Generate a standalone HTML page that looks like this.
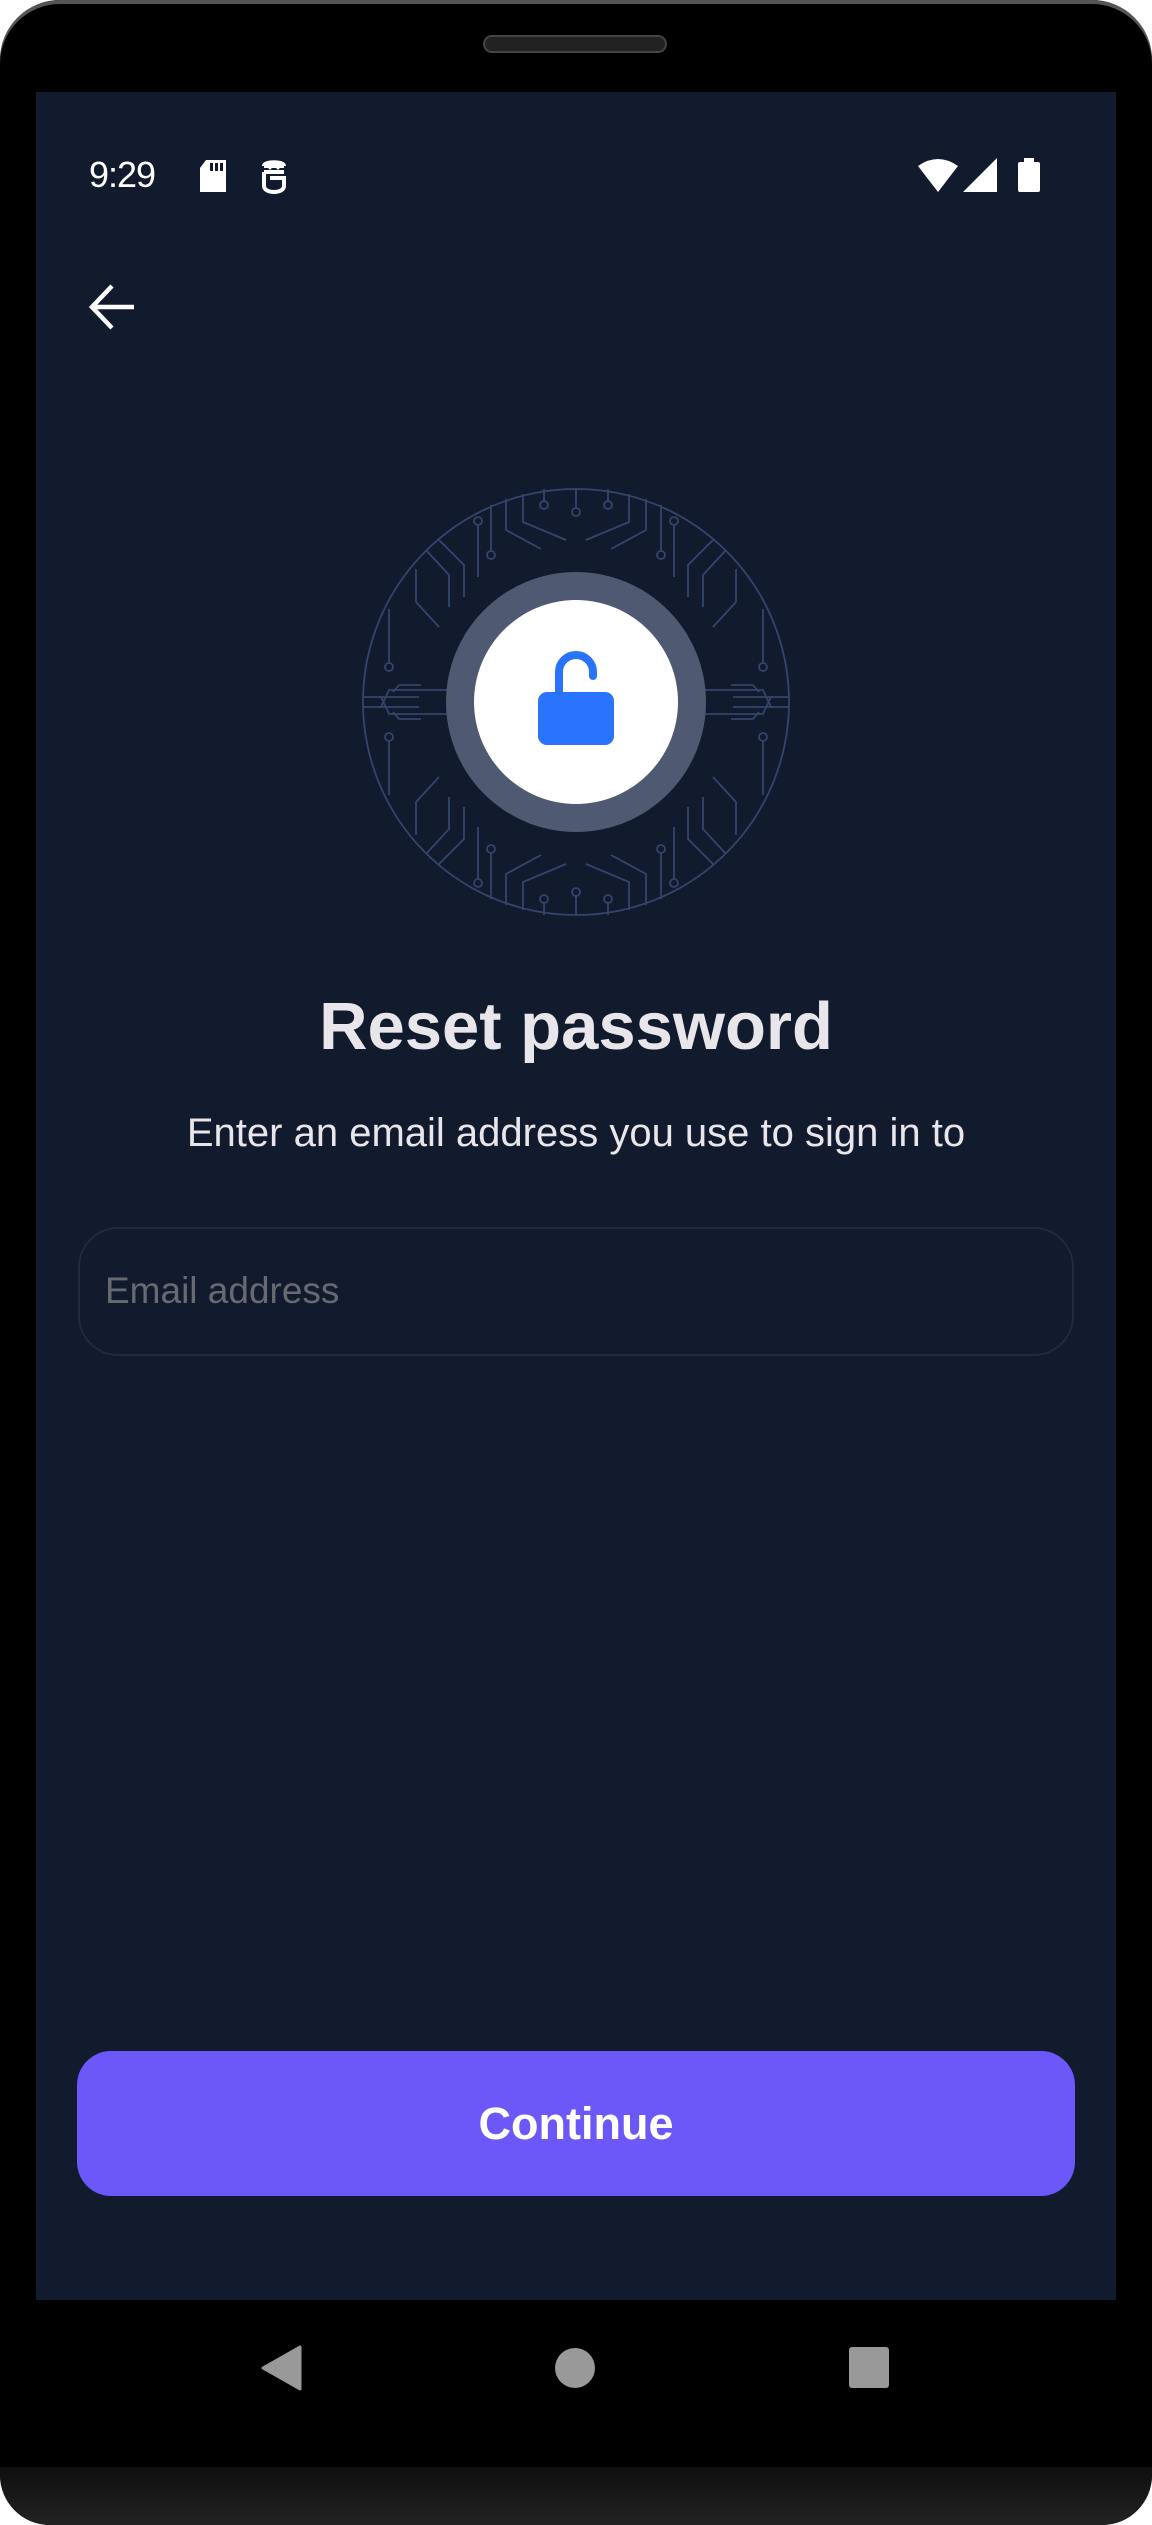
<!DOCTYPE html>
<html><head><meta charset="utf-8"><style>
html,body{margin:0;padding:0;background:#fff;}
body{width:1152px;height:2525px;position:relative;overflow:hidden;font-family:"Liberation Sans",sans-serif;}
.phone{position:absolute;left:0;top:0;width:1152px;height:2525px;background:#000;border-radius:60px 60px 50px 50px;box-shadow:inset 0 4px 0 #555;overflow:hidden;}
.chin{position:absolute;left:0;bottom:0;width:1152px;height:58px;background:linear-gradient(#0e0e0e,#232323);}
.speaker{position:absolute;left:483px;top:35px;width:184px;height:18px;border-radius:9px;background:#222;border:2px solid #444;box-sizing:border-box;}
.screen{position:absolute;left:36px;top:92px;width:1080px;height:2208px;background:#121a2e;}
.t{position:absolute;white-space:nowrap;}
</style></head><body>
<div class="phone">
<div class="speaker"></div>
<div class="screen">
 <div class="t" style="left:53px;top:62px;font-size:36px;color:#fff;letter-spacing:-1px;">9:29</div>
 <svg style="position:absolute;left:162px;top:68px" width="30" height="34" viewBox="0 0 30 34"><path d="M8 0H28V32H2V8Z" fill="#fff"/><rect x="12" y="3" width="3" height="8" fill="#121a2e"/><rect x="17" y="3" width="3" height="8" fill="#121a2e"/><rect x="22" y="3" width="3" height="8" fill="#121a2e"/></svg>
 <svg style="position:absolute;left:224px;top:66px" width="28" height="38" viewBox="0 0 28 38"><path d="M4 8H24M4 8C4 3 24 3 24 8M4 14H24M4 14V28C4 36 24 36 24 28V20H10" stroke="#fff" stroke-width="4" fill="none"/><circle cx="10" cy="10" r="1.5" fill="#fff"/><circle cx="18" cy="10" r="1.5" fill="#fff"/></svg>
 <svg style="position:absolute;left:882px;top:66px" width="130" height="36" viewBox="0 0 130 36"><path d="M0 8Q20 -6 40 8L20 34Z" fill="#fff"/><path d="M45 34L79 0V34Z" fill="#fff"/><rect x="100" y="4" width="22" height="30" rx="2" fill="#fff"/><rect x="106" y="0" width="10" height="5" fill="#fff"/></svg>
 <svg style="position:absolute;left:52px;top:190px" width="50" height="50" viewBox="0 0 50 50"><path d="M4 25H46M24 4L4 25L24 46" stroke="#fff" stroke-width="4.5" fill="none"/></svg>

 <svg style="position:absolute;left:325px;top:395px" width="430" height="430" viewBox="-215 -215 430 430">
  <defs><g id="q" stroke="#34446a" stroke-width="1.8" fill="none">
   <line x1="-32" y1="-213" x2="-32" y2="-200"/><circle cx="-32" cy="-197" r="4"/>
   <polyline points="-53,-208 -53,-180 -10,-162"/>
   <polyline points="-70,-203 -70,-172 -35,-153"/>
   <line x1="-85" y1="-197" x2="-85" y2="-151"/><circle cx="-85" cy="-147" r="4"/>
   <circle cx="-98" cy="-181" r="4"/><line x1="-98" y1="-177" x2="-98" y2="-125"/>
   <polyline points="-137,-162 -112,-137 -112,-105"/>
   <polyline points="-150,-152 -127,-127 -127,-95"/>
   <polyline points="-160,-133 -160,-100 -137,-75"/>
   <line x1="-187" y1="-93" x2="-187" y2="-39"/><circle cx="-187" cy="-35" r="4"/>
   <polyline points="-155,-17 -177,-17 -183,-10"/>
   <line x1="-213" y1="-5" x2="-157" y2="-5"/>
   <polyline points="-195,-5 -187,12 -127,12"/>
  </g></defs>
  <circle r="213" stroke="#34446a" stroke-width="1.8" fill="none"/>
  <g stroke="#34446a" stroke-width="1.8" fill="none"><line x1="0" y1="-213" x2="0" y2="-194"/><circle cx="0" cy="-190" r="4"/><line x1="0" y1="213" x2="0" y2="194"/><circle cx="0" cy="190" r="4"/></g>
  <use href="#q"/><use href="#q" transform="scale(-1,1)"/><use href="#q" transform="scale(1,-1)"/><use href="#q" transform="scale(-1,-1)"/>
  <circle r="130" fill="#4f5a72"/>
  <circle r="102" fill="#fff"/>
  <path d="M-17 -9V-30A17 17 0 0 1 17 -30V-26" stroke="#2a73ff" stroke-width="8" stroke-linecap="round" fill="none"/>
  <rect x="-38" y="-10" width="76" height="53" rx="9" fill="#2a73ff"/>
 </svg>

 <div class="t" style="left:0;width:1080px;text-align:center;top:896px;font-size:67px;font-weight:bold;color:#e8e6eb;">Reset password</div>
 <div class="t" style="left:0;width:1080px;text-align:center;top:1019px;font-size:40px;color:#e8e6eb;">Enter an email address you use to sign in to</div>
 <div style="position:absolute;left:42px;top:1135px;width:996px;height:129px;border:2px solid #222a3e;border-radius:40px;box-sizing:border-box;"></div>
 <div class="t" style="left:69px;top:1178px;font-size:37px;color:#686a72;">Email address</div>

 <div style="position:absolute;left:41px;top:1959px;width:998px;height:145px;background:#6c57f8;border-radius:34px;"></div>
 <div class="t" style="left:41px;width:998px;text-align:center;top:2006px;font-size:45px;font-weight:bold;color:#fff;">Continue</div>
</div>
<svg style="position:absolute;left:255px;top:2345px" width="640" height="46" viewBox="0 0 640 46"><path d="M45 2V44L8 23Z" fill="#999" stroke="#999" stroke-width="3" stroke-linejoin="round"/><circle cx="320" cy="23" r="20" fill="#999"/><rect x="594" y="2" width="40" height="41" rx="3" fill="#999"/></svg>
<div class="chin"></div>
</div>
</body></html>
